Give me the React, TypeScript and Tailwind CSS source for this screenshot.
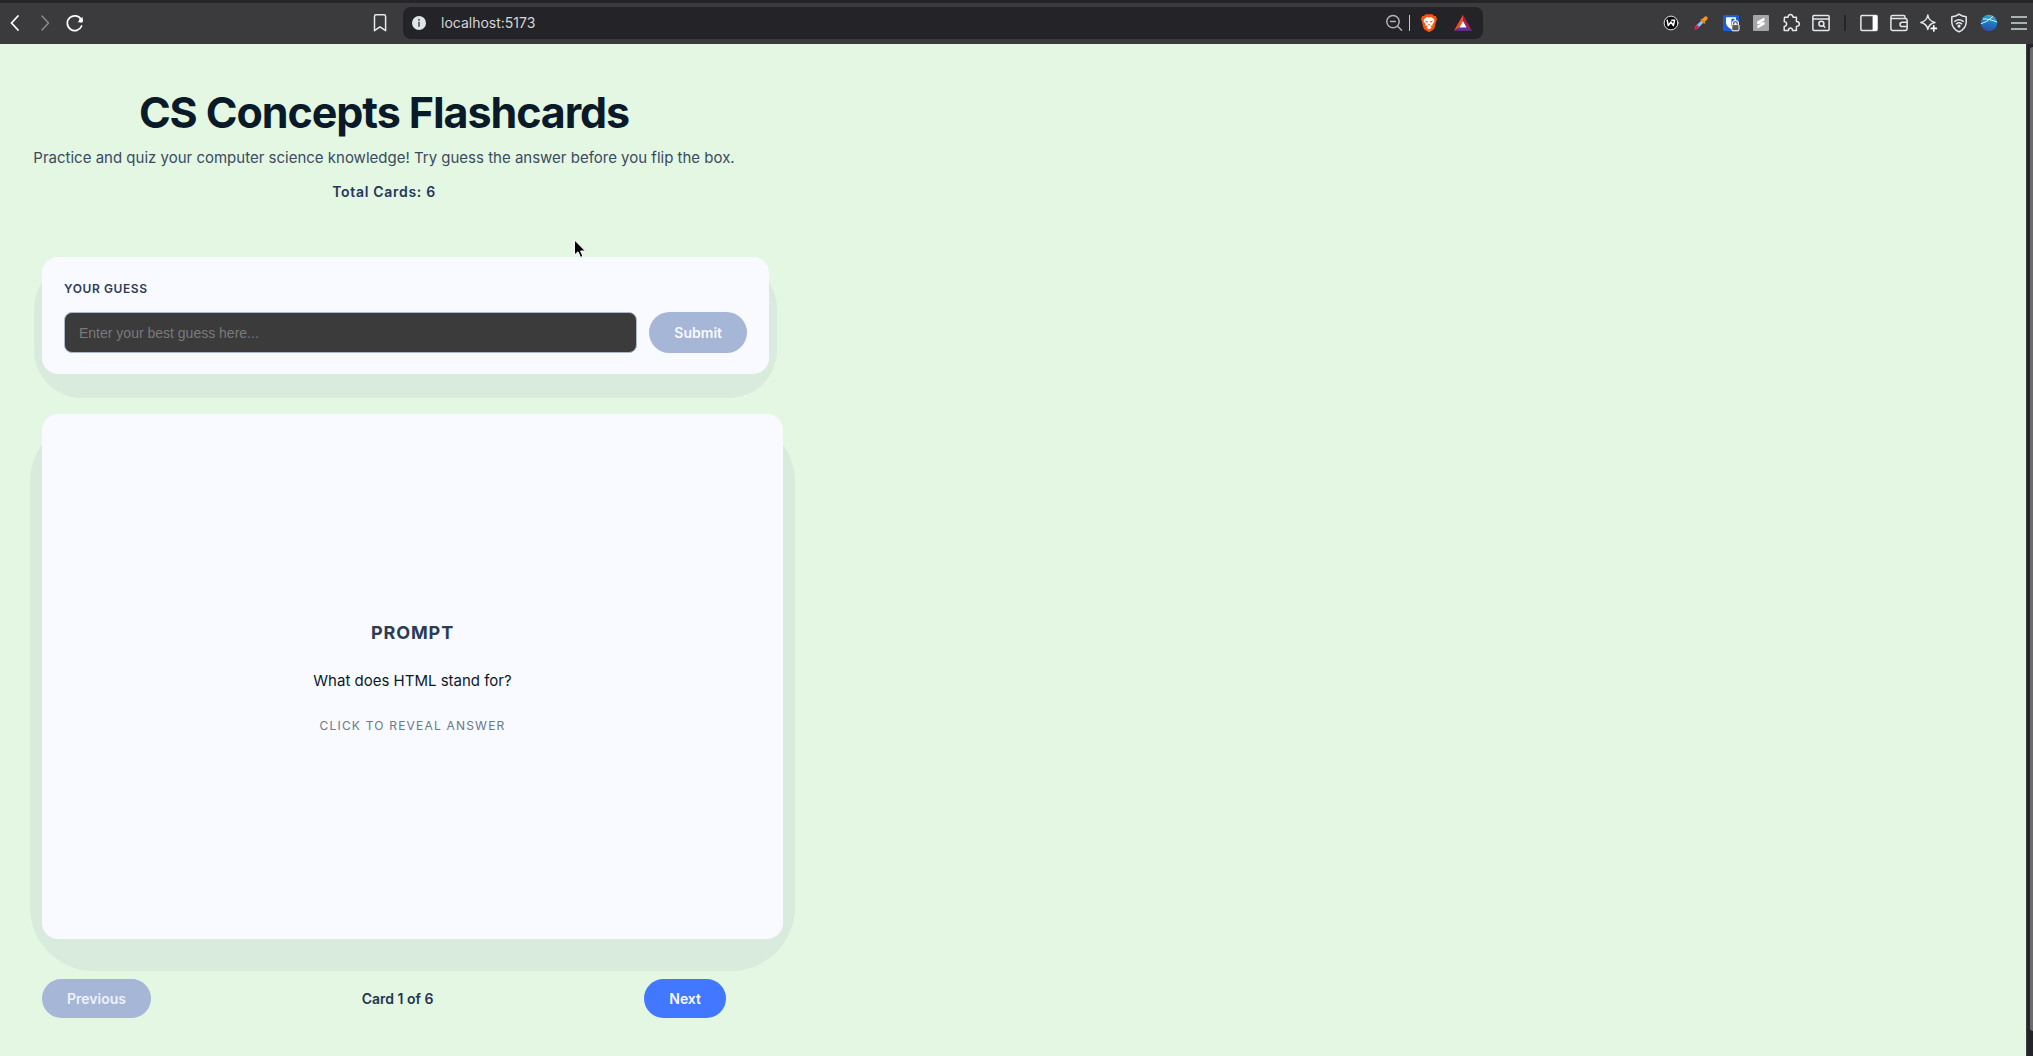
import { useState, type ReactNode } from "react";

function Slot({ label, children, className = "w-[30px]" }: { label: string; children: ReactNode; className?: string }) {
  return (
    <button type="button" aria-label={label} className={`flex h-8 shrink-0 items-center justify-center ${className}`}>
      {children}
    </button>
  );
}

const line = { fill: "none", stroke: "#e4e8ea", strokeWidth: 1.5, strokeLinecap: "round", strokeLinejoin: "round" } as const;

function Icon({ children }: { children: ReactNode }) {
  return (
    <svg width="20" height="20" viewBox="0 0 20 20" aria-hidden="true" {...line}>
      {children}
    </svg>
  );
}

function Toolbar() {
  return (
    <header className="flex h-11 items-center border-t-[3px] border-[#252528] bg-[#3b3b3d] pb-px">
      <Slot label="Back">
        <Icon><path d="M13 3 L6.5 10 L13 17" stroke="#fff" strokeWidth="1.8" /></Icon>
      </Slot>
      <Slot label="Forward">
        <Icon><path d="M7 3 L13.5 10 L7 17" stroke="#8b8b8e" /></Icon>
      </Slot>
      <Slot label="Reload">
        <Icon>
          <path d="M16.2 6.6 A7.4 7.4 0 1 0 16.6 13" stroke="#fff" strokeWidth="1.7" />
          <path d="M17.6 3.8 V9.2 H12.6 Z" fill="#fff" stroke="none" />
          <circle cx="16" cy="7.4" r="2" fill="#fff" stroke="none" />
        </Icon>
      </Slot>
      <div className="flex-[275]" />
      <Slot label="Bookmark">
        <Icon><path d="M4.5 17.7 V3.4 Q4.5 1.8 6 1.8 H14 Q15.6 1.8 15.6 3.4 V17.7 L10 13.8 Z" /></Icon>
      </Slot>
      <div className="ml-2 flex h-8 w-[1080px] min-w-0 items-center rounded-lg bg-[#242328] pr-[5px] pl-[6px]">
        <svg width="20" height="20" viewBox="0 0 20 20" className="shrink-0" aria-hidden="true">
          <circle cx="10" cy="10" r="7" fill="#dfe6e6" />
          <rect x="9" y="8.8" width="2" height="5" fill="#6c7273" />
          <rect x="9" y="5.8" width="2" height="2" fill="#6c7273" />
        </svg>
        <input
          aria-label="Address"
          defaultValue="localhost:5173"
          className="ml-3 min-w-0 flex-1 bg-transparent font-[Inter,sans-serif] text-sm text-[#d3d6d9] outline-none"
        />
        <Slot label="Zoom out">
          <Icon>
            <g stroke="#aeb4b6">
              <circle cx="9" cy="8.6" r="6.2" />
              <path d="M13.6 13.2 L17.6 17.2 M6.6 8.6 H11.4" />
            </g>
          </Icon>
        </Slot>
        <div className="h-4 w-px bg-[#c4c7c9]" />
        <Slot label="Shields" className="ml-1 w-[30px]">
          <svg width="20" height="20" viewBox="0 0 20 20" aria-hidden="true">
            <path d="M6.6 1.2 H13.4 L15 2.9 L16.8 3 L18 6 L17.3 8 L15.6 14.8 Q15 16.4 13.4 17.3 L10 19.2 L6.6 17.3 Q5 16.4 4.4 14.8 L2.7 8 L2 6 L3.2 3 L5 2.9 Z" fill="#fb5410" />
            <path d="M10 4.6 L12.3 4.1 L15 6.2 L15.4 8.2 L13.4 11.2 L13.6 12.4 L11.2 12.8 L12.6 14.4 L10 16.6 L7.4 14.4 L8.8 12.8 L6.4 12.4 L6.6 11.2 L4.6 8.2 L5 6.2 L7.7 4.1 Z" fill="#fff" />
            <path d="M5.8 7.6 L8.8 8.2 L8.2 10 Z M14.2 7.6 L11.2 8.2 L11.8 10 Z M8.6 11.3 H11.4 L10 12.7 Z" fill="#fb5410" />
          </svg>
        </Slot>
        <Slot label="Rewards" className="ml-1 w-[30px]">
          <svg width="20" height="20" viewBox="0 0 20 20" aria-hidden="true">
            <path d="M10 1.8 L1 17.8 L6.4 14.4 L10 8 Z" fill="#fa4a24" />
            <path d="M10 1.8 L19 17.8 L13.6 14.4 L10 8 Z" fill="#a0205c" />
            <path d="M1 17.8 H19 L13.6 14.4 H6.4 Z" fill="#66309c" />
            <path d="M10 8 L13.6 14.4 H6.4 Z" fill="#fff" />
          </svg>
        </Slot>
      </div>
      <div className="flex-[173]" />
      <Slot label="W extension">
        <Icon>
          <circle cx="10" cy="10" r="6.9" fill="#0c0c0c" strokeWidth="1" />
          <path d="M6.2 7.2 L7.2 12.6 L10 9 L12.4 12.6 L13.6 7.2 H10.8" stroke="#fff" strokeWidth="1.5" />
        </Icon>
      </Slot>
      <Slot label="Color picker">
        <Icon>
          <path d="M5.6 14.4 L11 9" stroke="#8ec3ee" strokeWidth="3" />
          <path d="M4.6 15.6 L6.4 13.7" stroke="#d9195b" strokeWidth="2.8" />
          <path d="M12.6 7.4 L14.8 5.2" stroke="#ff9410" strokeWidth="3.8" />
          <path d="M10.4 6.8 L13.4 9.8" stroke="#f57c00" strokeWidth="1.8" />
        </Icon>
      </Slot>
      <Slot label="Password manager">
        <svg width="20" height="20" viewBox="0 0 20 20" aria-hidden="true">
          <rect x="2" y="2" width="16" height="16" rx="1.5" fill="#175ddc" />
          <path d="M5 4.2 H15 V10 Q14.6 13.4 10 16 Q5.4 13.4 5 10 Z" fill="#fff" />
          <path d="M10.4 5.8 H13.6 V9.6 Q13.2 12 10.4 13.8 Z" fill="#175ddc" />
          <path d="M12.4 12 V10.6 A2 2 0 0 1 16.4 10.6 V12" fill="none" stroke="#fff" strokeWidth="3" />
          <rect x="10.8" y="11.6" width="7.2" height="6.2" rx="1" fill="#57585a" stroke="#fff" strokeWidth="1" />
          <path d="M12.6 11.6 V10.4 A1.8 1.8 0 0 1 16.2 10.4 V11.6" fill="none" stroke="#57585a" strokeWidth="1.3" />
        </svg>
      </Slot>
      <Slot label="S extension">
        <Icon>
          <rect x="2" y="2" width="16" height="16" rx="1" fill="#a5a5a7" stroke="none" />
          <path d="M6.2 8.6 L13.4 4.6 V7.4 L9.4 9.6 L13.6 9 V11.4 L6.4 15.4 V12.6 L10.4 10.4 L6.2 11.2 Z" fill="#fff" stroke="none" />
        </Icon>
      </Slot>
      <Slot label="Extensions">
        <Icon>
          <path d="M3.5 4.3 H7 Q7.2 1.4 9.5 1.4 Q11.8 1.4 12 4.3 H15.4 V8.6 Q18.4 8.8 18.4 11 Q18.4 13.2 15.4 13.4 V17.6 H11.6 Q11.4 15 9.5 15 Q7.6 15 7.4 17.6 H3.2 V13.4 Q5.6 13.2 5.6 11 Q5.6 9 3.2 8.6 Z" />
        </Icon>
      </Slot>
      <Slot label="Search tabs">
        <Icon>
          <rect x="1.9" y="2.4" width="16.2" height="15.2" rx="1" />
          <path d="M2 5.9 H18" />
          <circle cx="10.4" cy="10.8" r="2.5" />
          <path d="M12.3 12.8 L13.8 14.3" />
        </Icon>
      </Slot>
      <div className="mx-2 h-4 w-[2px] shrink-0 bg-[#252528]" />
      <Slot label="Side panel">
        <Icon>
          <rect x="1.9" y="2.6" width="16.2" height="14.8" rx="1" />
          <rect x="13.6" y="2.6" width="4.4" height="14.8" fill="#fff" stroke="none" />
        </Icon>
      </Slot>
      <Slot label="Wallet">
        <Icon>
          <path d="M16 5.4 V3.9 Q16 2.6 14.6 2.6 H3.6 Q1.9 2.6 1.9 4.2 V15.4 Q1.9 17.4 3.9 17.4 H16.2 Q18.1 17.4 18.1 15.6 V7.2 Q18.1 5.5 16.4 5.5 H3.4 Q2 5.5 1.9 4.2" />
          <path d="M18 9.2 H13.3 Q11 9.4 11 11.4 Q11 13.4 13.3 13.6 H18" />
        </Icon>
      </Slot>
      <Slot label="Assistant">
        <Icon>
          <path d="M8.8 2 Q9.8 8.2 16 9.4 Q9.8 10.6 8.8 16.4 Q7.8 10.6 1.8 9.4 Q7.8 8.2 8.8 2 Z" />
          <path d="M14.8 12.8 V18 M12.2 15.4 H17.4" stroke="#fff" strokeWidth="1.7" />
        </Icon>
      </Slot>
      <Slot label="VPN">
        <Icon>
          <path d="M10 1.2 Q13 3.6 17.2 3.8 V9.2 Q17 15.6 10 18.8 Q3 15.6 2.8 9.2 V3.8 Q7 3.6 10 1.2 Z" />
          <path d="M5.8 8.4 Q10 5.2 14.2 8.4 M7.4 10.8 Q10 8.8 12.6 10.8" />
          <circle cx="10" cy="13.1" r="0.8" fill="#fff" />
        </Icon>
      </Slot>
      <Slot label="Profile">
        <svg width="20" height="20" viewBox="0 0 20 20" aria-hidden="true">
          <defs>
            <linearGradient id="globe" x1="0.6" y1="0" x2="0.4" y2="1">
              <stop offset="0" stopColor="#30b2c8" />
              <stop offset="0.5" stopColor="#1979c4" />
              <stop offset="1" stopColor="#354aa6" />
            </linearGradient>
            <clipPath id="disc"><circle cx="10" cy="10" r="8.2" /></clipPath>
          </defs>
          <circle cx="10" cy="10" r="8.2" fill="url(#globe)" />
          <g clipPath="url(#disc)" fill="none" stroke="#e4f2fa" strokeWidth="1">
            <path d="M1 11 Q8 9.6 14 3.4" />
            <path d="M4 6 Q10 5.6 19 9.4" />
          </g>
        </svg>
      </Slot>
      <Slot label="Menu" className="w-[29px]">
        <svg width="20" height="20" viewBox="0 0 20 20" fill="none" stroke="#a9b2b2" strokeWidth="2" aria-hidden="true">
          <path d="M2 4 H18 M2 10 H18 M2 16 H18" />
        </svg>
      </Slot>
    </header>
  );
}

const cards = ["What does HTML stand for?"];
const total = 6;

export default function App() {
  const [guess, setGuess] = useState("");

  return (
    <div className="flex min-h-screen flex-col bg-[#e3f7e3] font-[Inter,sans-serif] text-[#0b1a28]">
      <Toolbar />
      <div className="flex flex-1">
        <main className="relative min-w-0 flex-1 px-[42px] pt-10 pb-9">
          <div className="flex w-full max-w-[684px] flex-col items-center">
            <h1 className="text-[43px] leading-[56px] font-bold tracking-tight whitespace-nowrap">CS Concepts Flashcards</h1>
            <p className="mt-[6px] text-[15px] leading-6 whitespace-nowrap text-[#3b4b60]">
              Practice and quiz your computer science knowledge! Try guess the answer before you flip the box.
            </p>
            <p className="mt-3 text-sm leading-5 font-semibold tracking-wider text-[#25365a]">Total Cards: {total}</p>
          </div>

          <section className="relative isolate mt-[55px] w-full max-w-[727px]">
            <div className="absolute -inset-x-2 top-1 -bottom-6 -z-10 rounded-[48px] bg-[#d8ebdc]" />
            <form className="rounded-2xl bg-[#f9faff] px-[22px] pt-[23px] pb-[21px]" onSubmit={(e) => e.preventDefault()}>
              <label htmlFor="guess" className="block text-xs leading-[18px] font-semibold tracking-wider text-[#2b3c55]">
                YOUR GUESS
              </label>
              <div className="mt-[14px] flex gap-3">
                <input
                  id="guess"
                  value={guess}
                  onChange={(e) => setGuess(e.target.value)}
                  placeholder="Enter your best guess here..."
                  className="h-[41px] min-w-0 flex-1 rounded-lg border border-[#a9b8cc] bg-[#3b3b3c] px-[14px] font-['Liberation_Sans',sans-serif] text-sm text-white placeholder:text-[#7a7a7b]"
                />
                <button type="submit" className="h-[41px] rounded-full bg-[#a5b6d6] px-[25px] text-sm font-semibold text-[#f9faff]">
                  Submit
                </button>
              </div>
            </form>
          </section>

          <section className="relative isolate mt-10 w-full max-w-[741px]">
            <div className="absolute -inset-x-3 top-1 -bottom-8 -z-10 rounded-[64px] bg-[#d8ebdc]" />
            <button type="button" className="flex h-[525px] w-full flex-col items-center justify-center rounded-2xl bg-[#f9faff] pt-1">
              <span className="text-lg leading-6 font-bold tracking-wider text-[#2b3c55]">PROMPT</span>
              <span className="mt-6 text-[15px] leading-6">{cards[0]}</span>
              <span className="mt-[23px] text-xs leading-5 tracking-widest text-[#68788b]">CLICK TO REVEAL ANSWER</span>
            </button>
          </section>

          <nav className="mt-10 flex w-full max-w-[684px] items-center justify-between" aria-label="Cards">
            <button type="button" className="h-[39px] rounded-full bg-[#a5b6d6] px-[25px] text-sm font-semibold text-[#eef2fb]">
              Previous
            </button>
            <span className="text-sm font-semibold text-[#25364c]">Card 1 of {total}</span>
            <button type="button" className="h-[39px] rounded-full bg-[#4178ff] px-[25px] text-sm font-semibold text-[#f9faff]">
              Next
            </button>
          </nav>

          <svg className="absolute top-[195px] left-[573px]" width="14" height="20" viewBox="0 0 14 20" aria-hidden="true">
            <path d="M1.5 1 V16 L5 12.8 L7.6 18.4 L10 17.4 L7.6 12 H12.4 Z" fill="#000" stroke="#fff" strokeWidth="1" />
          </svg>
        </main>
        <div className="flex w-[7px] shrink-0 flex-col border-l border-[#3b3b3f] bg-[#242328] pt-[3px] pb-[25px] pl-[3px]">
          <div className="flex-1 rounded-l bg-[#6b6b6c]" />
        </div>
      </div>
    </div>
  );
}
